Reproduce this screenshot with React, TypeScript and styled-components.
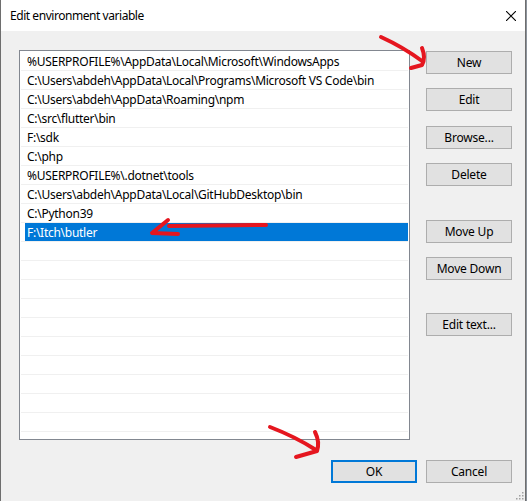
import styled, { createGlobalStyle } from "styled-components";

const GlobalStyle = createGlobalStyle`
  body {
    margin: 0;
    background: #8c939c;
    font-family: "Noto Sans", "Open Sans", sans-serif;
  }
`;

const Window = styled.div`
  position: relative;
  width: 526px;
  height: 501px;
  box-sizing: border-box;
  border-left: 1px solid #6e6e6e;
  border-right: 1px solid #6e6e6e;
  background: #f0f0f0;
  display: flex;
  flex-direction: column;
  overflow: hidden;
`;

const TitleBar = styled.div`
  height: 31px;
  flex: none;
  background: #ffffff;
  display: flex;
  align-items: center;
  justify-content: space-between;
  padding: 0 9px 0 9px;
`;

const Title = styled.span`
  font-size: 12px;
  letter-spacing: -0.45px;
  color: #000000;
`;

const CloseIcon = styled.svg`
  width: 10px;
  height: 10px;
`;

const Body = styled.div`
  flex: 1;
  display: flex;
  flex-direction: column;
  padding: 19px 13px 0 18px;
`;

const Main = styled.div`
  display: flex;
  gap: 16px;
`;

const List = styled.div`
  width: 391px;
  height: 390px;
  box-sizing: border-box;
  background: #ffffff;
  border: 1px solid #828790;
  padding: 1px 1px 0 1px;
  overflow: hidden;
`;

const Row = styled.div`
  height: 18px;
  border-bottom: 1px solid #f0f0f0;
  display: flex;
`;

const Cell = styled.div<{ $selected?: boolean }>`
  flex: 1;
  margin-left: 4px;
  padding-left: 2px;
  font-size: 12px;
  letter-spacing: -0.27px;
  line-height: 19px;
  white-space: nowrap;
  color: ${(p) => (p.$selected ? "#ffffff" : "#000000")};
  background: ${(p) => (p.$selected ? "#0078d7" : "transparent")};
`;

const ButtonColumn = styled.div`
  display: flex;
  flex-direction: column;
  padding-top: 1px;
`;

const Button = styled.button<{ $gap?: number; $default?: boolean }>`
  width: 86px;
  height: 23px;
  box-sizing: border-box;
  margin-top: ${(p) => p.$gap ?? 0}px;
  background: #e1e1e1;
  border: ${(p) => (p.$default ? "2px solid #0078d7" : "1px solid #adadad")};
  font-family: "Noto Sans", "Open Sans", sans-serif;
  font-size: 12px;
  letter-spacing: -0.2px;
  color: #000000;
  padding: 0;
`;

const Footer = styled.div`
  display: flex;
  justify-content: flex-end;
  gap: 9px;
  margin-top: 20px;
`;

const Grip = styled.svg`
  position: absolute;
  right: 1px;
  bottom: 1px;
  width: 10px;
  height: 10px;
`;

const Overlay = styled.svg`
  position: absolute;
  left: 0;
  top: 0;
  width: 526px;
  height: 501px;
  pointer-events: none;
`;

const paths = [
  "%USERPROFILE%\\AppData\\Local\\Microsoft\\WindowsApps",
  "C:\\Users\\abdeh\\AppData\\Local\\Programs\\Microsoft VS Code\\bin",
  "C:\\Users\\abdeh\\AppData\\Roaming\\npm",
  "C:\\src\\flutter\\bin",
  "F:\\sdk",
  "C:\\php",
  "%USERPROFILE%\\.dotnet\\tools",
  "C:\\Users\\abdeh\\AppData\\Local\\GitHubDesktop\\bin",
  "C:\\Python39",
  "F:\\Itch\\butler",
];

const rows = [...paths, ...Array(10).fill("")];

const App = () => (
  <>
    <GlobalStyle />
    <Window>
      <TitleBar>
        <Title>Edit environment variable</Title>
        <CloseIcon viewBox="0 0 10 10">
          <path d="M0 0 L10 10 M10 0 L0 10" stroke="#000" strokeWidth="1.1" />
        </CloseIcon>
      </TitleBar>
      <Body>
        <Main>
          <List>
            {rows.map((text, i) => (
              <Row key={i}>
                <Cell $selected={i === 9}>{text}</Cell>
              </Row>
            ))}
          </List>
          <ButtonColumn>
            <Button>New</Button>
            <Button $gap={14}>Edit</Button>
            <Button $gap={15}>Browse...</Button>
            <Button $gap={14}>Delete</Button>
            <Button $gap={34}>Move Up</Button>
            <Button $gap={14}>Move Down</Button>
            <Button $gap={33}>Edit text...</Button>
          </ButtonColumn>
        </Main>
        <Footer>
          <Button $default>OK</Button>
          <Button>Cancel</Button>
        </Footer>
      </Body>
      <Grip viewBox="0 0 10 10">
        {[
          [8, 2],
          [5, 5],
          [8, 5],
          [2, 8],
          [5, 8],
          [8, 8],
        ].map(([x, y], i) => (
          <rect key={i} x={x} y={y} width="1.5" height="1.5" fill="#a0a0a0" />
        ))}
      </Grip>
      <Overlay viewBox="0 0 526 501">
        <g fill="none" stroke="#e5161f" strokeWidth="4" strokeLinecap="round" strokeLinejoin="round">
          <path d="M380 37 Q 402 47 421 61" />
          <path d="M421 48 Q 425 58 421 65 L 410 68" />
          <path d="M168 226 L 265 225" />
          <path d="M167 220 L 151 233 L 177 234" />
          <path d="M269 427 Q 295 437 315 450" />
          <path d="M314 432 Q 319 442 316 451 L 295 457" />
        </g>
      </Overlay>
    </Window>
  </>
);

export default App;
